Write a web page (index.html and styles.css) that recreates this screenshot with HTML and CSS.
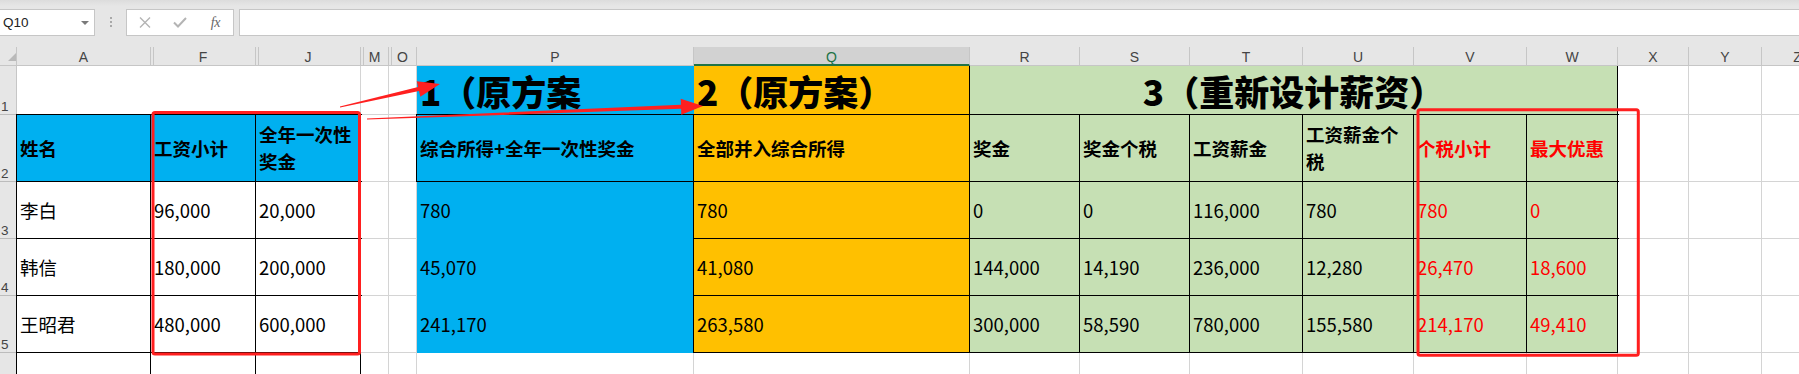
FILE: index.html
```html
<!DOCTYPE html>
<html lang="zh-CN">
<head>
    <meta charset="UTF-8">
    <title>个税方案对比</title>
    <link rel="stylesheet" href="styles.css">
</head>
<body>
    <div class="formula-bar">
        <div class="name-box"><span>Q10</span><span class="caret"></span></div>
        <div class="grip"></div>
        <div class="fx-buttons">
            <span class="fx-btn">
                <svg width="12" height="11" viewBox="0 0 12 11"><path d="M1 0.5 L11 10.5 M11 0.5 L1 10.5" stroke="#b4b4b4" stroke-width="1.4" fill="none"/></svg>
            </span>
            <span class="fx-btn">
                <svg width="14" height="11" viewBox="0 0 14 11"><path d="M1 5.5 L5 9.5 L13 1" stroke="#b4b4b4" stroke-width="2" fill="none"/></svg>
            </span>
            <span class="fx-btn fx">fx</span>
        </div>
        <div class="formula-input"></div>
    </div>

    <div class="sheet">
        <!-- column headers -->
        <div class="corner"></div>
        <div class="hd">A</div>
        <div class="hd gap">F</div>
        <div class="hd gap">J</div>
        <div class="hd gap">M</div>
        <div class="hd gap">O</div>
        <div class="hd">P</div>
        <div class="hd sel">Q</div>
        <div class="hd">R</div>
        <div class="hd">S</div>
        <div class="hd">T</div>
        <div class="hd">U</div>
        <div class="hd">V</div>
        <div class="hd">W</div>
        <div class="hd">X</div>
        <div class="hd">Y</div>
        <div class="hd">Z</div>

        <!-- row 1 -->
        <div class="rh">1</div>
        <div class="c span3"></div>
        <div class="c"></div>
        <div class="c"></div>
        <div class="c blue title">1（原方案</div>
        <div class="c orange title edge-r">2（原方案）</div>
        <div class="c green title edge-r span6 center">3（重新设计薪资）</div>
        <div class="c"></div>
        <div class="c"></div>
        <div class="c"></div>

        <!-- row 2 -->
        <div class="rh">2</div>
        <div class="c blue box th">姓名</div>
        <div class="c blue box th">工资小计</div>
        <div class="c blue box th">全年一次性奖金</div>
        <div class="c"></div>
        <div class="c"></div>
        <div class="c blue box th">综合所得+全年一次性奖金</div>
        <div class="c orange box th">全部并入综合所得</div>
        <div class="c green box th">奖金</div>
        <div class="c green box th">奖金个税</div>
        <div class="c green box th">工资薪金</div>
        <div class="c green box th">工资薪金个税</div>
        <div class="c green box th red">个税小计</div>
        <div class="c green box th red">最大优惠</div>
        <div class="c"></div>
        <div class="c"></div>
        <div class="c"></div>

        <!-- row 3 -->
        <div class="rh">3</div>
        <div class="c box">李白</div>
        <div class="c box">96,000</div>
        <div class="c box">20,000</div>
        <div class="c"></div>
        <div class="c"></div>
        <div class="c blue">780</div>
        <div class="c orange box">780</div>
        <div class="c green box">0</div>
        <div class="c green box">0</div>
        <div class="c green box">116,000</div>
        <div class="c green box">780</div>
        <div class="c green box red">780</div>
        <div class="c green box red">0</div>
        <div class="c"></div>
        <div class="c"></div>
        <div class="c"></div>

        <!-- row 4 -->
        <div class="rh">4</div>
        <div class="c box">韩信</div>
        <div class="c box">180,000</div>
        <div class="c box">200,000</div>
        <div class="c"></div>
        <div class="c"></div>
        <div class="c blue">45,070</div>
        <div class="c orange box">41,080</div>
        <div class="c green box">144,000</div>
        <div class="c green box">14,190</div>
        <div class="c green box">236,000</div>
        <div class="c green box">12,280</div>
        <div class="c green box red">26,470</div>
        <div class="c green box red">18,600</div>
        <div class="c"></div>
        <div class="c"></div>
        <div class="c"></div>

        <!-- row 5 -->
        <div class="rh">5</div>
        <div class="c box">王昭君</div>
        <div class="c box">480,000</div>
        <div class="c box">600,000</div>
        <div class="c"></div>
        <div class="c"></div>
        <div class="c blue">241,170</div>
        <div class="c orange box">263,580</div>
        <div class="c green box">300,000</div>
        <div class="c green box">58,590</div>
        <div class="c green box">780,000</div>
        <div class="c green box">155,580</div>
        <div class="c green box red">214,170</div>
        <div class="c green box red">49,410</div>
        <div class="c"></div>
        <div class="c"></div>
        <div class="c"></div>

        <!-- row 6 (number falls below the visible area) -->
        <div class="rh"></div>
        <div class="c side"></div>
        <div class="c side"></div>
        <div class="c side"></div>
        <div class="c"></div>
        <div class="c"></div>
        <div class="c"></div>
        <div class="c"></div>
        <div class="c"></div>
        <div class="c"></div>
        <div class="c"></div>
        <div class="c"></div>
        <div class="c"></div>
        <div class="c"></div>
        <div class="c"></div>
        <div class="c"></div>
        <div class="c"></div>
    </div>

    <!-- red markup drawn over the sheet -->
    <svg class="marks" width="1799" height="374" viewBox="0 0 1799 374">
        <rect x="153" y="112.5" width="206.5" height="241.5" rx="2" fill="none" stroke="#ff1f1f" stroke-width="3"/>
        <rect x="1418" y="109.7" width="220.3" height="245.5" rx="2" fill="none" stroke="#ff1f1f" stroke-width="3"/>
        <polygon fill="#ff2020" points="339.89,106.51 418.11,86.98 416.77,81.13 440,84 420.35,96.73 419.01,90.88 340.11,107.49"/>
        <polygon fill="#ff2020" points="366.98,118.4 680.94,104.85 680.71,98.86 703,106 681.33,114.84 681.10,108.85 367.02,119.6"/>
    </svg>
</body>
</html>
```

FILE: styles.css
```css
:root {
    --blue: #00b0f0;
    --orange: #ffc000;
    --green: #c6e0b4;
    --grid: #d4d4d4;
    --chrome: #e6e6e6;
    --chrome-line: #c6c6c6;
}

* {
    margin: 0;
    padding: 0;
    box-sizing: border-box;
}

body {
    position: relative;
    width: 1799px;
    height: 374px;
    overflow: hidden;
    background-color: var(--chrome);
    font-family: "Noto Sans CJK SC", sans-serif;
}

/* formula bar */
.formula-bar {
    display: flex;
    height: 47px;
    padding-top: 9px;
    background: linear-gradient(#dcdcdc, var(--chrome) 6px);
}

.name-box {
    display: flex;
    align-items: center;
    justify-content: space-between;
    width: 96px;
    height: 27px;
    margin-left: -1px;
    padding: 0 5px 0 3px;
    background-color: #fff;
    border: 1px solid var(--chrome-line);
    font: 13.5px "Liberation Sans", sans-serif;
    color: #222;
}

.caret {
    width: 0;
    height: 0;
    border-left: 4px solid transparent;
    border-right: 4px solid transparent;
    border-top: 4px solid #7a7a7a;
}

.grip {
    display: flex;
    justify-content: center;
    width: 31px;
    padding-top: 8px;
}

.grip::before {
    content: "";
    width: 2px;
    height: 10px;
    background: repeating-linear-gradient(#a8a8a8 0 2px, transparent 2px 4px);
}

.fx-buttons {
    display: flex;
    width: 108px;
    height: 27px;
    background-color: #fff;
    border: 1px solid var(--chrome-line);
}

.fx-btn {
    display: flex;
    align-items: center;
    justify-content: center;
    width: 36px;
}

.fx {
    font: italic 14px "Liberation Serif", serif;
    color: #666;
    letter-spacing: -0.5px;
}

.formula-input {
    flex: 1;
    height: 27px;
    margin-left: 5px;
    background-color: #fff;
    border: 1px solid var(--chrome-line);
    border-right: none;
}

/* sheet grid */
.sheet {
    display: grid;
    grid-template-columns: 17px 134px 105px 105px 28px 28px 277px 276px 110px 110px 113px 111px 113px 91px 71px 73px 72px;
    grid-template-rows: 19px 49px 67px 57px 57px 57px 57px;
    background-color: #fff;
}

.corner {
    display: flex;
    justify-content: flex-end;
    align-items: flex-end;
    padding-bottom: 4px;
    background-color: var(--chrome);
    border-right: 1px solid var(--chrome-line);
    border-bottom: 1px solid var(--chrome-line);
}

.corner::after {
    content: "";
    border-left: 8px solid transparent;
    border-bottom: 8px solid #b9b9b9;
}

.hd {
    display: flex;
    justify-content: center;
    align-items: center;
    padding-top: 2px;
    background-color: var(--chrome);
    border-right: 1px solid var(--chrome-line);
    border-bottom: 1px solid var(--chrome-line);
    font: 14px "Liberation Sans", sans-serif;
    color: #444;
}

.hd.gap {
    box-shadow: inset 2px 0 0 var(--chrome), inset 3px 0 0 var(--chrome-line);
}

.hd.sel {
    background-color: #d2d2d2;
    border-bottom: 2px solid #217346;
    color: #217346;
}

.rh {
    display: flex;
    align-items: flex-end;
    padding-left: 1px;
    background-color: var(--chrome);
    border-right: 1px solid var(--chrome-line);
    border-bottom: 1px solid #bcbcbc;
    font: 13.5px/14px "Liberation Sans", sans-serif;
    color: #444;
}

.c {
    display: flex;
    align-items: center;
    padding: 0 3px;
    background-color: #fff;
    border-right: 1px solid var(--grid);
    border-bottom: 1px solid var(--grid);
    font-size: 18.5px;
    line-height: 1.45;
    color: #000;
}

.span3 {
    grid-column: span 3;
}

.span6 {
    grid-column: span 6;
}

.center {
    justify-content: center;
}

.blue {
    background-color: var(--blue);
    border-color: transparent;
}

.orange {
    background-color: var(--orange);
    border-color: transparent;
}

.green {
    background-color: var(--green);
    border-color: transparent;
}

.title {
    font-size: 35px;
    font-weight: 900;
    padding-top: 2px;
}

.th {
    font-weight: 700;
}

.red {
    color: #ff0000;
}

/* black cell borders */
.box {
    border-color: #000;
    box-shadow: 0 0 0 1px #000;
}

.edge-r {
    border-right-color: #000;
}

.side {
    border-right-color: #000;
    box-shadow: -1px 0 0 #000;
}

.marks {
    position: absolute;
    top: 0;
    left: 0;
    pointer-events: none;
}
```
